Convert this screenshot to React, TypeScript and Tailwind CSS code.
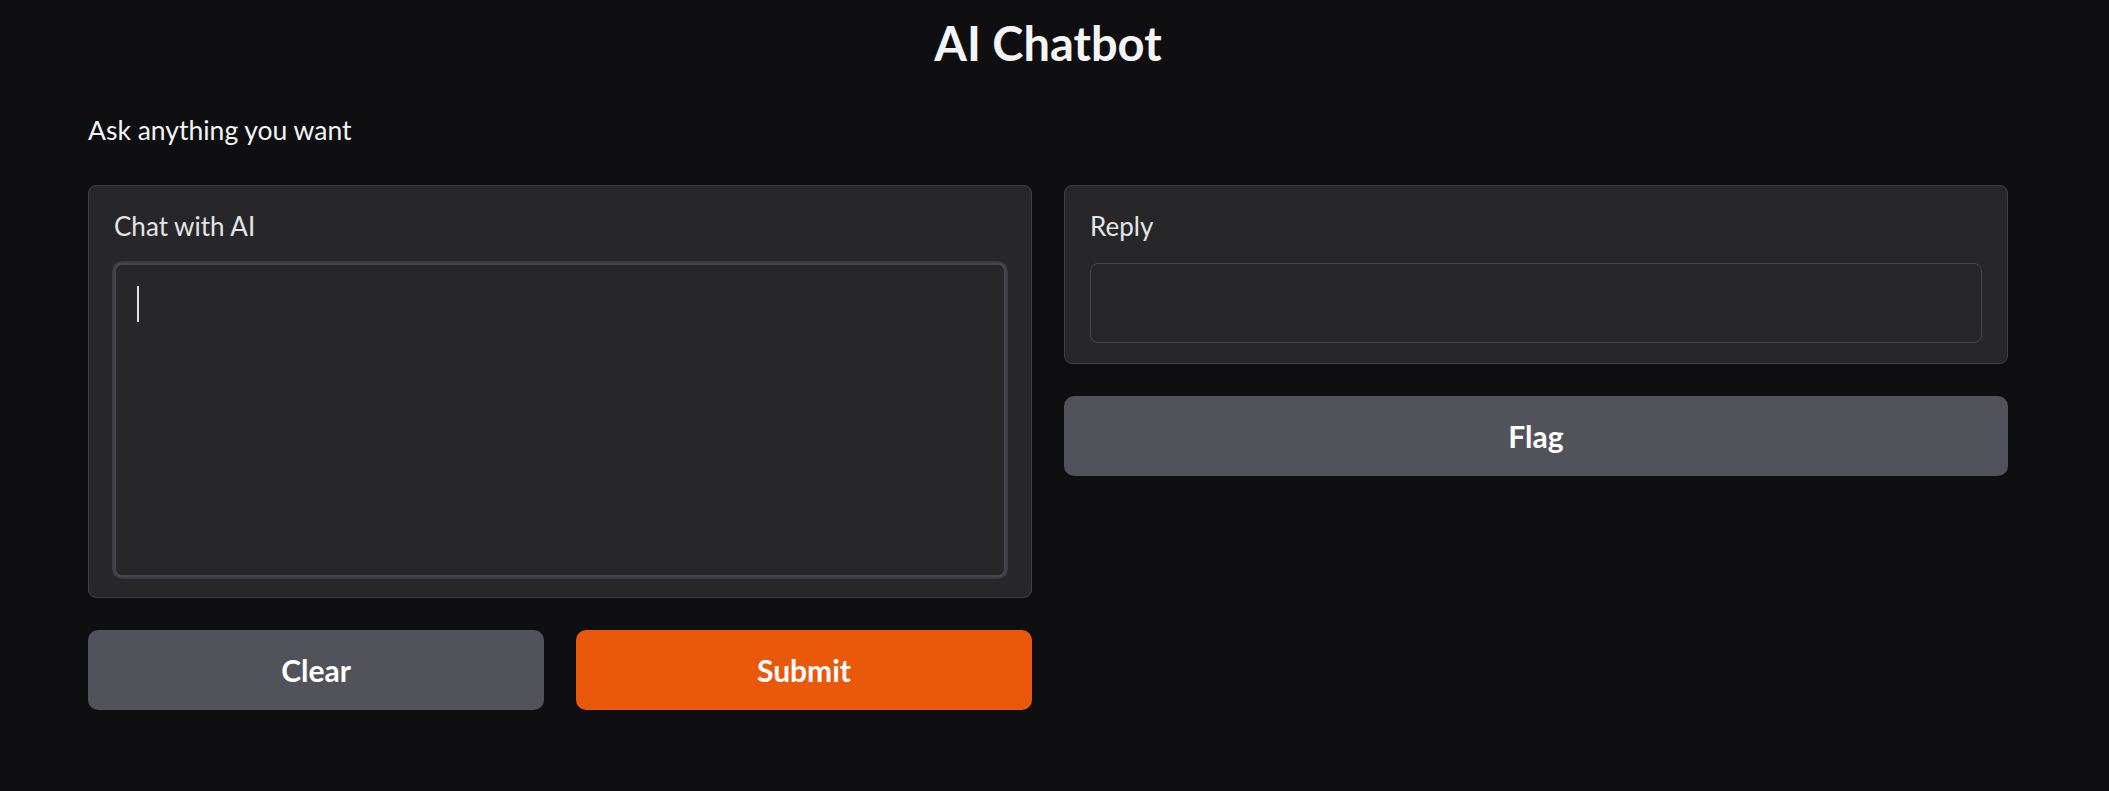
import { FC } from 'react';

const Panel: FC<{ label: string; children: React.ReactNode }> = ({ label, children }) => (
  <div className="rounded-lg border border-[#3f3f46] bg-[#27272a] px-[25px] pb-5 pt-[21px]">
    <div className="mb-[17px] text-[26px] leading-[39px] text-[#e4e4e7]">{label}</div>
    {children}
  </div>
);

const App: FC = () => {
  return (
    <div
      className="min-h-screen bg-[#0f0f11] text-[#f4f4f5]"
      style={{ fontFamily: 'Lato, "Noto Sans", sans-serif' }}
    >
      <div className="ml-[88px] w-[1920px] pt-[15px]">
        <h1 className="text-center text-[47px] font-bold leading-[1.2] text-[#f4f4f5]">AI Chatbot</h1>
        <p className="mt-[40px] text-[26.5px] leading-[39px]">Ask anything you want</p>

        <div className="mt-[35px] grid grid-cols-2 items-start gap-8">
          <div className="flex flex-col gap-8">
            <Panel label="Chat with AI">
              <div className="h-[314px] rounded-lg border-2 border-[#46464e] bg-[#27272a] pl-[21px] pt-[21px] shadow-[0_0_0_2px_#3b3b42]">
                <span className="block h-[36px] w-[2px] bg-[#e4e4e7]" />
              </div>
            </Panel>
            <div className="grid grid-cols-2 gap-8">
              <button className="h-[80px] rounded-[10px] bg-[#52525b] text-[30px] font-bold text-white">
                Clear
              </button>
              <button className="h-[80px] rounded-[10px] bg-[#ea580c] text-[30px] font-bold text-white">
                Submit
              </button>
            </div>
          </div>

          <div className="flex flex-col gap-8">
            <Panel label="Reply">
              <div className="h-[80px] rounded-lg border border-[#44444c] bg-[#27272a]" />
            </Panel>
            <button className="h-[80px] rounded-[10px] bg-[#52525b] text-[30px] font-bold text-white">
              Flag
            </button>
          </div>
        </div>
      </div>
    </div>
  );
};

export default App;
